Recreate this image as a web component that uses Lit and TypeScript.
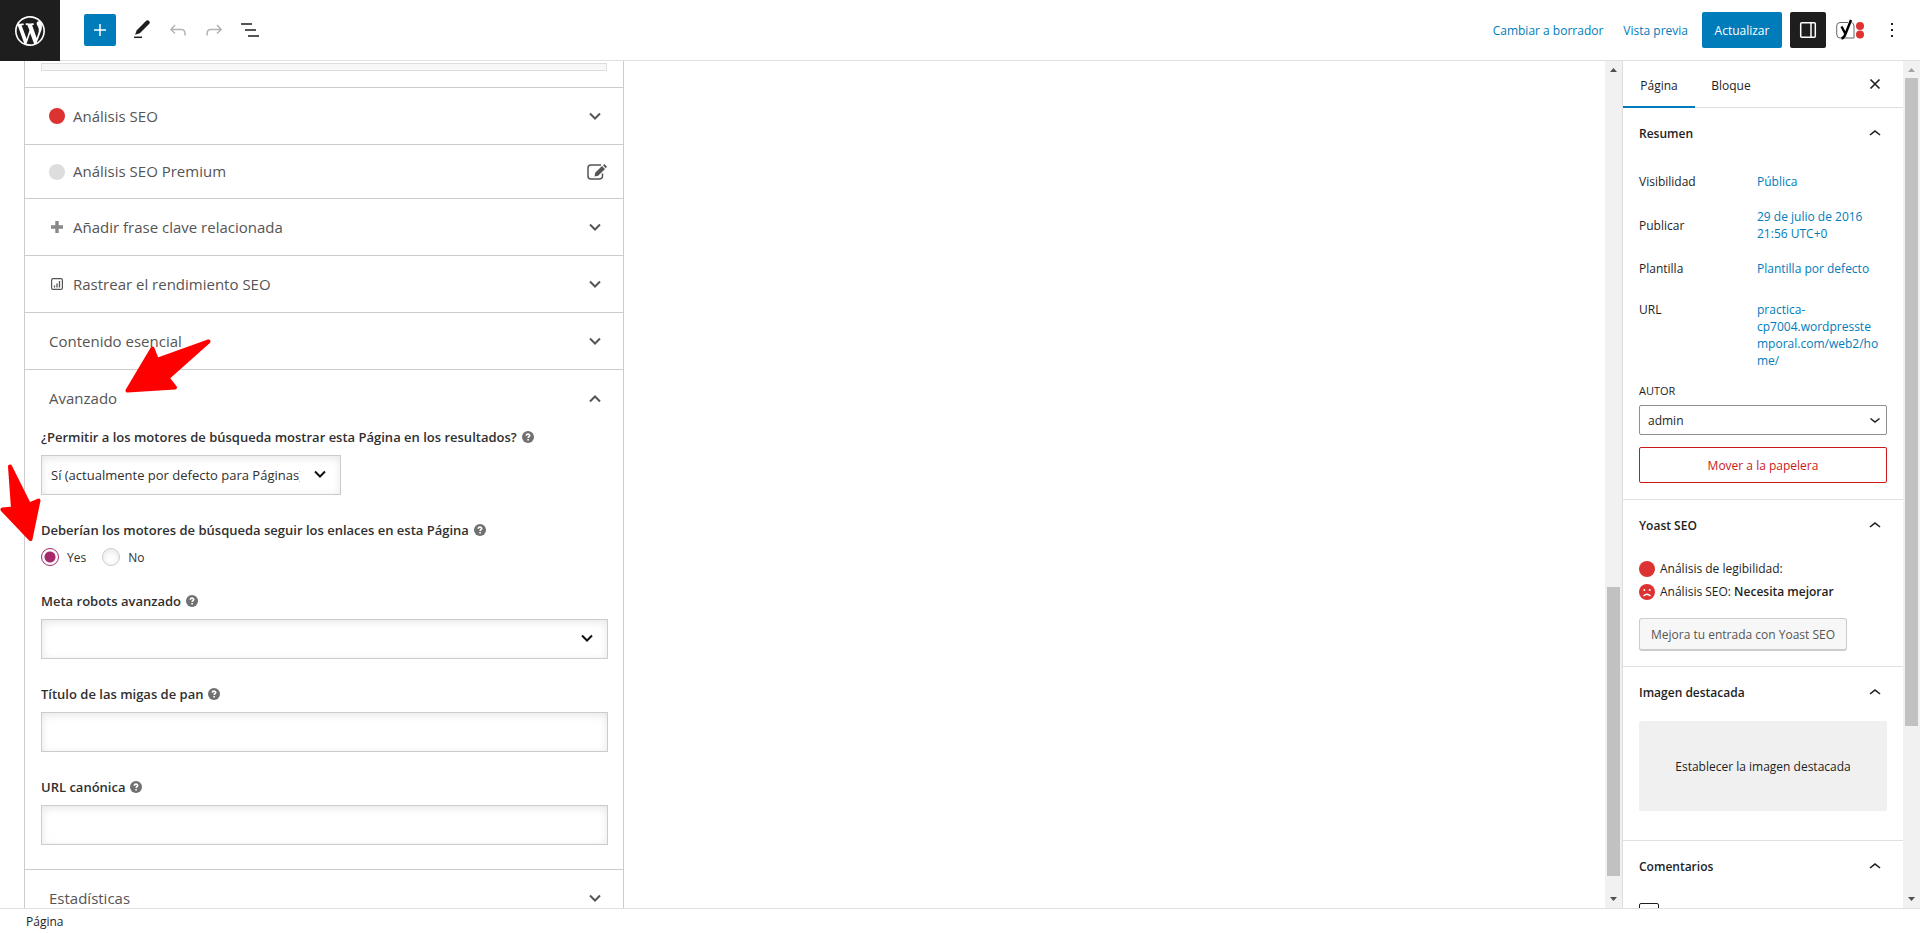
import { LitElement, html, css } from "lit";
import { customElement } from "lit/decorators.js";

const chevronThin = html`
  <svg viewBox="0 0 24 24" width="24" height="24" aria-hidden="true">
    <path fill="currentColor" d="M6.500 12.400L12 8l5.500 4.400-.9 1.200L12 10l-4.500 3.600z"/>
  </svg>`;

const chevron = (up = false) => html`
  <svg class="chevron" viewBox="0 0 14 14" width="14" height="14" aria-hidden="true">
    <path d=${up ? "M2 9.500L7 4.500L12 9.500" : "M2 4.500L7 9.500L12 4.500"} fill="none" stroke="currentColor" stroke-width="2"/>
  </svg>`;

const help = html`
  <svg viewBox="0 0 12 12" width="12" height="12" aria-hidden="true">
    <circle cx="6" cy="6" r="6" fill="#707070"/>
    <path d="M4.200 4.700C4.300 2.600 7.900 2.700 7.700 4.600C7.600 5.700 6.100 5.700 6.100 7.100M6.100 8.100V9.500" fill="none" stroke="#fff" stroke-width="1.600"/>
  </svg>`;

@customElement("app-root")
export class AppRoot extends LitElement {
  static styles = css`
    :host {
      display: grid;
      grid-template-rows: 61px minmax(0, 1fr) 25px;
      height: 100vh;
      position: relative;
      overflow: hidden;
      background: #fff;
      color: #1e1e1e;
      font: 12px/17px "Open Sans", "Noto Sans", sans-serif;
    }
    * { box-sizing: border-box; }
    button, input, select { font: inherit; color: inherit; margin: 0; }
    button { border: 0; background: none; padding: 0; cursor: pointer; }
    svg { display: block; flex: none; }
    a { color: #007cba; text-decoration: none; }
    h2 { margin: 0; font-size: 12px; font-weight: 600; }

    .topbar {
      display: flex;
      align-items: center;
      border-bottom: 1px solid #e0e0e0;
      padding-right: 16px;
    }
    .logo {
      width: 60px;
      height: 61px;
      align-self: flex-start;
      display: grid;
      place-items: center;
      background: #1e1e1e;
    }
    .tools { display: flex; align-items: center; gap: 12px; margin-left: 24px; }
    .add {
      width: 32px;
      height: 32px;
      margin-right: 2px;
      display: grid;
      place-items: center;
      background: #007cba;
      border-radius: 2px;
      color: #fff;
    }
    .tool { display: grid; place-items: center; width: 24px; height: 32px; }
    .tool:disabled { color: #b4b4b4; }
    .actions { display: flex; align-items: center; margin-left: auto; }
    .link { color: #007cba; margin-right: 20px; }
    .update {
      height: 36px;
      min-width: 80px;
      padding: 0 12px;
      margin-left: -6px;
      margin-right: 8px;
      background: #007cba;
      color: #fff;
      border-radius: 2px;
    }
    .settings {
      width: 36px;
      height: 36px;
      margin-right: 8px;
      display: grid;
      place-items: center;
      background: #1e1e1e;
      color: #fff;
      border-radius: 2px;
    }
    .yoast { margin-right: 14px; }

    .main { display: flex; min-height: 0; }
    .editor { flex: 1; min-width: 0; overflow: hidden; padding-left: 24px; }
    .bar {
      flex: none;
      width: 17px;
      background: #f1f1f1;
      display: flex;
      flex-direction: column;
      align-items: center;
    }
    .arrow { height: 17px; width: 17px; flex: none; }
    .before-low { flex: 510; }
    .thumb-low { flex: 289; width: 13px; background: #c1c1c1; }
    .after-low { flex: 15; }
    .thumb-high { flex: 649; width: 13px; background: #c1c1c1; }
    .after-high { flex: 165; }

    .metabox {
      width: 600px;
      max-width: 100%;
      border: 1px solid #ccc;
      border-top: 0;
      border-bottom: 0;
      color: #555;
      font-size: 15px;
    }
    .preview { padding: 2px 16px 16px; border-bottom: 1px solid #ccc; }
    .preview-bar { height: 8px; border: 1px solid #ddd; background: #f7f7f7; }
    .row {
      display: flex;
      align-items: center;
      width: 100%;
      height: 57px;
      padding: 0 16px 0 24px;
      border-bottom: 1px solid #ccc;
      text-align: left;
      font-size: 15px;
    }
    .row .chevron { margin-right: 5px; }
    .row.short { height: 54px; }
    .row.open { border-bottom: 0; }
    .row .grow { flex: 1; }
    .row .mark { width: 16px; margin-right: 8px; display: grid; place-items: center; }
    .dot { width: 16px; height: 16px; border-radius: 50%; background: #dc3232; }
    .dot.gray { background: #ddd; }
    .advanced {
      padding: 0 15px 24px 16px;
      border-bottom: 1px solid #ccc;
      font-size: 12px;
      color: #303030;
    }
    .label {
      display: flex;
      align-items: center;
      gap: 5px;
      height: 20px;
      margin-bottom: 8px;
      padding: 0;
      font-size: 13px;
      font-weight: 600;
    }
    .field { margin: 0 0 25px; padding: 0; border: 0; }
    .field:last-child { margin-bottom: 0; }
    .box {
      display: block;
      width: 100%;
      height: 40px;
      border: 1px solid #ccc;
      border-radius: 0;
      background: #fff;
      box-shadow: inset 0 2px 8px rgba(0, 0, 0, 0.1);
      padding: 0 9px;
      font-size: 13px;
      appearance: none;
    }
    .pick { position: relative; }
    .pick.narrow { width: 300px; }
    .pick select { padding-right: 40px; overflow: hidden; text-overflow: clip; }
    .pick svg { position: absolute; right: 14px; top: 12px; color: #111; pointer-events: none; }
    .radios { display: flex; align-items: center; height: 18px; }
    .radios label { margin: 0 16px 0 8px; }
    .radio {
      appearance: none;
      width: 18px;
      height: 18px;
      border: 1px solid #ccc;
      border-radius: 50%;
      background: #fff;
      box-shadow: inset 0 2px 6px rgba(0, 0, 0, 0.1);
    }
    .radio:checked {
      border-color: #a4286a;
      background: radial-gradient(circle, #a4286a 5px, #fff 6px);
      box-shadow: none;
    }

    .sidebar { width: 281px; flex: none; border-left: 1px solid #ddd; overflow: hidden; }
    .tabs { display: flex; height: 47px; border-bottom: 1px solid #ddd; align-items: stretch; }
    .tab { min-width: 72px; padding: 2px 16px 0; }
    .tab.active { box-shadow: inset 0 -2px #007cba; margin-bottom: -1px; }
    .close { margin: 0 16px 0 auto; }
    .section { border-bottom: 1px solid #e0e0e0; padding: 0 16px; }
    .head {
      display: flex;
      width: 100%;
      align-items: center;
      justify-content: space-between;
      height: 51px;
    }
    .props {
      display: grid;
      grid-template-columns: 118px minmax(0, 1fr);
      margin: 14px 0 0;
      row-gap: 18px;
      align-items: center;
    }
    .props dt, .props dd { margin: 0; }
    .props dd { overflow-wrap: anywhere; padding-right: 8px; }
    .props .top { align-self: start; padding-top: 6px; }
    .author-label { display: block; font-size: 11px; font-weight: 500; margin: 13px 0 6px; }
    .author { position: relative; }
    .author select {
      width: 100%;
      height: 30px;
      appearance: none;
      border: 1px solid #8c8f94;
      border-radius: 2px;
      background: #fff;
      padding: 0 8px;
    }
    .author svg { position: absolute; right: 0; top: 3px; pointer-events: none; }
    .trash {
      display: block;
      width: 100%;
      height: 36px;
      margin: 12px 0 16px;
      border: 1px solid #cc1818;
      border-radius: 2px;
      color: #cc1818;
    }
    .score { display: flex; align-items: center; gap: 5px; height: 23px; }
    .score b { font-weight: 600; }
    .scores { padding-top: 6px; }
    .improve {
      height: 33px;
      padding: 0 11px;
      margin: 15px 0;
      border: 1px solid #ccc;
      border-bottom-width: 2px;
      border-radius: 3px;
      background: #f7f7f7;
      color: #555;
    }
    .featured {
      display: block;
      width: 100%;
      height: 90px;
      margin: 3px 0 29px;
      background: #f0f0f0;
      border-radius: 2px;
    }
    .check {
      display: block;
      appearance: none;
      width: 20px;
      height: 20px;
      margin: 11px 0 0;
      border: 1px solid #1e1e1e;
      border-radius: 2px;
    }
    .footer { border-top: 1px solid #e0e0e0; padding: 4px 26px 0; }
    .marks { position: absolute; left: 0; top: 330px; pointer-events: none; }
  `;

  private arrow(up: boolean, color = "#505050") {
    return html`<svg class="arrow" viewBox="0 0 17 17" aria-hidden="true">
      <path fill=${color} d=${up ? "M5 11L8.500 7L12 11z" : "M5 6L8.500 10L12 6z"}/></svg>`;
  }

  private row(text: string, mark: unknown = null, short = false, end: unknown = chevron()) {
    return html`<button class="row ${short ? "short" : ""}">
      ${mark ? html`<span class="mark">${mark}</span>` : null}
      <span class="grow">${text}</span>${end}
    </button>`;
  }

  private head(text: string) {
    return html`<h2><button class="head">${text}${chevronThin}</button></h2>`;
  }

  render() {
    const plus = html`<svg viewBox="0 0 12 12" width="12" height="12" aria-hidden="true"><path d="M6 0V12M0 6H12" stroke="#888" stroke-width="3.400"/></svg>`;
    const graph = html`<svg viewBox="0 0 12 12" width="12" height="12" aria-hidden="true">
      <rect x=".6" y=".6" width="10.800" height="10.800" rx="1.500" fill="none" stroke="#555" stroke-width="1.200"/>
      <path d="M3.500 9.500V7.500M6 9.500V5.500M8.500 9.500V3" stroke="#555" stroke-width="1.300"/></svg>`;
    const edit = html`<svg viewBox="0 0 20 18" width="20" height="18" aria-hidden="true">
      <path d="M14 2H4Q1 2 1 5V13Q1 16 4 16H12Q15.500 16 15.500 13V10.500" fill="none" stroke="#555" stroke-width="1.500"/>
      <path d="M7.500 13.500L8.200 9.800L15 3L18 6L11.200 12.800zM16 2.200L17.300 1L20 3.700L18.700 5.200z" fill="#555"/></svg>`;
    return html`
      <header class="topbar">
        <a class="logo" href="#" aria-label="WordPress">
          <svg viewBox="0 0 24 24" width="36" height="36" fill="#fff" aria-hidden="true">
            <path d="M20 10c0-5.510-4.490-10-10-10C4.480 0 0 4.490 0 10c0 5.520 4.480 10 10 10 5.510 0 10-4.480 10-10zM7.780 15.370L4.370 6.220c.55-.02 1.170-.08 1.170-.08.5-.06.44-1.130-.06-1.110 0 0-1.450.11-2.370.11-.18 0-.37 0-.58-.01C4.120 2.690 6.870 1.110 10 1.110c2.330 0 4.450.87 6.050 2.340-.68-.11-1.650.39-1.650 1.580 0 .74.45 1.360.9 2.100.35.61.55 1.360.55 2.460 0 1.490-1.400 5-1.400 5l-3.030-8.370c.54-.02.82-.17.82-.17.5-.05.44-1.250-.06-1.220 0 0-1.440.12-2.380.12-.87 0-2.330-.12-2.330-.12-.5-.03-.56 1.200-.06 1.220l.92.08 1.260 3.410zM17.410 10c.24-.64.74-1.870.43-4.250.7 1.290 1.050 2.710 1.050 4.250 0 3.290-1.730 6.240-4.400 7.780.97-2.590 1.940-5.200 2.920-7.780zM6.100 18.090C3.120 16.650 1.110 13.530 1.110 10c0-1.300.23-2.480.72-3.590C3.250 10.300 4.670 14.200 6.100 18.090zm4.030-6.630l2.580 6.980c-.86.29-1.760.45-2.710.45-.79 0-1.570-.11-2.290-.33.81-2.380 1.620-4.740 2.420-7.100z" transform="translate(2 2)"/>
          </svg>
        </a>
        <div class="tools">
          <button class="add" aria-label="Añadir bloque">
            <svg viewBox="0 0 12 12" width="12" height="12"><path d="M6 0V12M0 6H12" stroke="#fff" stroke-width="1.500"/></svg>
          </button>
          <button class="tool" aria-label="Herramientas">
            <svg viewBox="0 0 24 24" width="24" height="24"><path d="M4 19.300H12" stroke="currentColor" stroke-width="1.500"/><path fill="currentColor" d="M5 16.800L6.800 12.200L16.200 2.800Q17.800 1.600 19.200 2.900Q20.600 4.300 19.300 5.800L9.800 15.200z"/></svg>
          </button>
          <button class="tool" aria-label="Deshacer" disabled>
            <svg viewBox="0 0 24 24" width="24" height="24"><path fill="currentColor" d="M18.300 11.700c-.6-.6-1.400-.9-2.300-.9H6.700l2.900-3.300-1.100-1-4.500 5L8.500 16l1-1-2.700-2.700H16c.5 0 .9.200 1.300.5 1 1 1 3.400 1 4.500v.3h1.500v-.2c0-1.500 0-4.300-1.500-5.700z"/></svg>
          </button>
          <button class="tool" aria-label="Rehacer" disabled>
            <svg viewBox="0 0 24 24" width="24" height="24"><path fill="currentColor" d="M15.600 6.500l-1.100 1 2.900 3.300H8c-.9 0-1.700.3-2.300.9-1.400 1.500-1.400 4.200-1.400 5.600v.2h1.500v-.3c0-1.100 0-3.500 1-4.500.3-.3.7-.5 1.300-.5h9.200L14.500 15l1.100 1.100 4.600-4.600-4.600-5z"/></svg>
          </button>
          <button class="tool" aria-label="Vista de lista">
            <svg viewBox="0 0 24 24" width="24" height="24"><path d="M3 6H14M7 12H18M10 18H21" stroke="currentColor" stroke-width="1.600"/></svg>
          </button>
        </div>
        <div class="actions">
          <button class="link">Cambiar a borrador</button>
          <button class="link">Vista previa</button>
          <button class="update">Actualizar</button>
          <button class="settings" aria-label="Ajustes">
            <svg viewBox="0 0 24 24" width="24" height="24"><rect x="4.700" y="4.700" width="14.600" height="14.600" rx="1" fill="none" stroke="#fff" stroke-width="1.500"/><path d="M15 5V19" stroke="#fff" stroke-width="1.500"/></svg>
          </button>
          <button class="yoast" aria-label="Yoast SEO">
            <svg viewBox="0 0 32 24" width="32" height="24">
              <path d="M14 4.500H6Q2.700 4.500 2.700 8V16Q2.700 20 6 20H20V8Q20 5 17.500 4.500" fill="none" stroke="#666" stroke-width="1"/>
              <path d="M7.500 8.500L11.500 16M17 2L11.500 16Q10 20 7.500 20.500" fill="none" stroke="#000" stroke-width="2.400"/>
              <circle cx="26" cy="8" r="4" fill="#dc3232"/><circle cx="26" cy="16.500" r="4" fill="#dc3232"/>
            </svg>
          </button>
          <button aria-label="Opciones">
            <svg viewBox="0 0 24 24" width="24" height="24"><path fill="currentColor" d="M11 5h2v2h-2zM11 11h2v2h-2zM11 17h2v2h-2z"/></svg>
          </button>
        </div>
      </header>

      <main class="main">
        <div class="editor">
          <div class="metabox">
            <div class="preview"><div class="preview-bar"></div></div>
            ${this.row("Análisis SEO", html`<span class="dot"></span>`)}
            ${this.row("Análisis SEO Premium", html`<span class="dot gray"></span>`, true, edit)}
            ${this.row("Añadir frase clave relacionada", plus)}
            ${this.row("Rastrear el rendimiento SEO", graph)}
            ${this.row("Contenido esencial")}
            <button class="row open"><span class="grow">Avanzado</span>${chevron(true)}</button>
            <div class="advanced">
              <div class="field">
                <label class="label" for="index">¿Permitir a los motores de búsqueda mostrar esta Página en los resultados? ${help}</label>
                <div class="pick narrow">
                  <select class="box" id="index"><option>Sí (actualmente por defecto para Páginas)</option></select>${chevron()}
                </div>
              </div>
              <fieldset class="field">
                <legend class="label">Deberían los motores de búsqueda seguir los enlaces en esta Página ${help}</legend>
                <div class="radios">
                  <input class="radio" type="radio" name="follow" id="yes" checked><label for="yes">Yes</label>
                  <input class="radio" type="radio" name="follow" id="no"><label for="no">No</label>
                </div>
              </fieldset>
              <div class="field">
                <label class="label" for="robots">Meta robots avanzado ${help}</label>
                <div class="pick"><select class="box" id="robots"><option></option></select>${chevron()}</div>
              </div>
              <div class="field">
                <label class="label" for="crumbs">Título de las migas de pan ${help}</label>
                <input class="box" id="crumbs" type="text">
              </div>
              <div class="field">
                <label class="label" for="canonical">URL canónica ${help}</label>
                <input class="box" id="canonical" type="text">
              </div>
            </div>
            ${this.row("Estadísticas")}
          </div>
        </div>
        <div class="bar" aria-hidden="true">
          ${this.arrow(true)}<div class="before-low"></div><div class="thumb-low"></div><div class="after-low"></div>${this.arrow(false)}
        </div>
        <aside class="sidebar">
          <div class="tabs">
            <button class="tab active">Página</button>
            <button class="tab">Bloque</button>
            <button class="close" aria-label="Cerrar">
              <svg viewBox="0 0 24 24" width="24" height="24"><path d="M7.500 7.500L16.500 16.500M16.500 7.500L7.500 16.500" stroke="currentColor" stroke-width="1.600"/></svg>
            </button>
          </div>
          <section class="section">
            ${this.head("Resumen")}
            <dl class="props">
              <dt>Visibilidad</dt><dd><a href="#">Pública</a></dd>
              <dt>Publicar</dt><dd><a href="#">29 de julio de 2016 21:56 UTC+0</a></dd>
              <dt>Plantilla</dt><dd><a href="#">Plantilla por defecto</a></dd>
              <dt class="top">URL</dt><dd class="top"><a href="#">practica-<wbr>cp7004.wordpresstemporal.com/web2/home/</a></dd>
            </dl>
            <label class="author-label" for="author">AUTOR</label>
            <div class="author"><select id="author"><option>admin</option></select>
              <svg viewBox="0 0 24 24" width="24" height="24"><path d="M7.500 10.500L12 14L16.500 10.500" fill="none" stroke="currentColor" stroke-width="1.500"/></svg>
            </div>
            <button class="trash">Mover a la papelera</button>
          </section>
          <section class="section">
            ${this.head("Yoast SEO")}
            <div class="scores">
              <div class="score"><span class="dot"></span><span>Análisis de legibilidad:</span></div>
              <div class="score">
                <svg viewBox="0 0 16 16" width="16" height="16" aria-hidden="true"><circle cx="8" cy="8" r="8" fill="#dc3232"/>
                  <circle cx="5.300" cy="6" r="1" fill="#fff"/><circle cx="10.700" cy="6" r="1" fill="#fff"/>
                  <path d="M4.500 12Q8 8.500 11.500 12" fill="none" stroke="#fff" stroke-width="1.300"/></svg>
                <span>Análisis SEO: <b>Necesita mejorar</b></span>
              </div>
            </div>
            <button class="improve">Mejora tu entrada con Yoast SEO</button>
          </section>
          <section class="section">
            ${this.head("Imagen destacada")}
            <button class="featured">Establecer la imagen destacada</button>
          </section>
          <section class="section">
            ${this.head("Comentarios")}
            <input class="check" type="checkbox" aria-label="Permitir comentarios">
          </section>
        </aside>
        <div class="bar" aria-hidden="true">
          ${this.arrow(true, "#a3a3a3")}<div class="thumb-high"></div><div class="after-high"></div>${this.arrow(false)}
        </div>
      </main>
      <footer class="footer">Página</footer>
      <svg class="marks" viewBox="0 0 220 220" width="220" height="220" aria-hidden="true">
        <g fill="#f00" stroke="#f00" stroke-width="4" stroke-linejoin="round">
          <path d="M127.500 60.500L152.500 18.500L157 30L208.500 11.500L167.500 48L175 57.500z"/>
          <path d="M10 136.500L29 174.500L38.500 170.500L30.500 209L2.500 179.500L13 178.500z"/>
        </g>
      </svg>`;
  }
}
